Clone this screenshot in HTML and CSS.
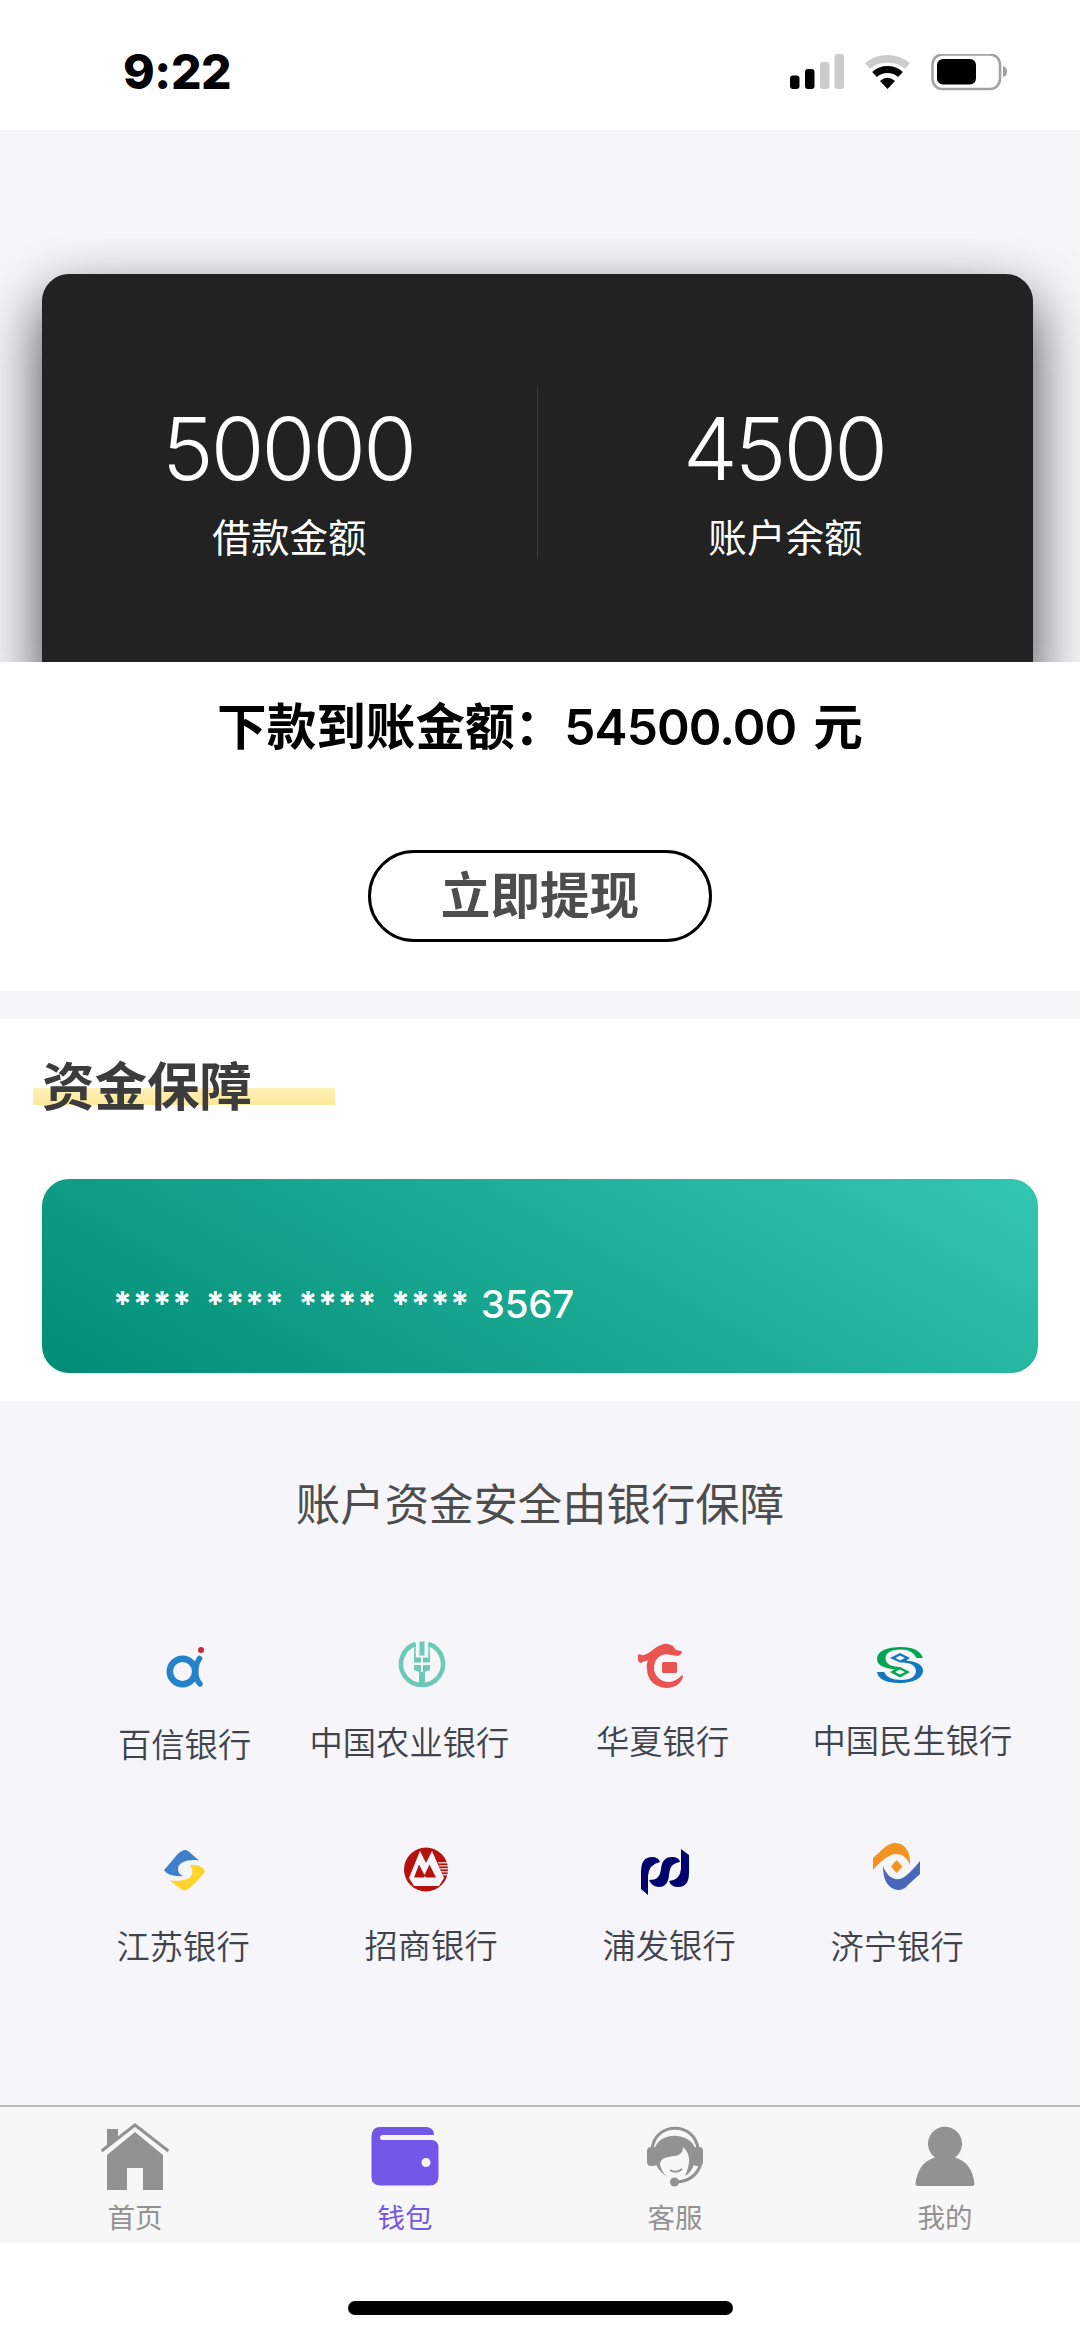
FILE: index.html
```html
<!DOCTYPE html>
<html lang="zh-CN">
<head>
<meta charset="utf-8">
<title>钱包</title>
<link rel="stylesheet" href="styles.css">
</head>
<body>
<div class="screen">
  <header class="status">
    <span class="clock">9:22</span>
    <svg class="status-icons" width="220" height="40" viewBox="0 0 220 40">
      <rect x="0" y="21.500" width="9.500" height="13.500" rx="3"/>
      <rect x="15" y="15" width="9.500" height="20" rx="3"/>
      <rect x="30" y="8" width="9.500" height="27" rx="3" fill="#ccc"/>
      <rect x="44.500" y="0" width="9.500" height="35" rx="3" fill="#ccc"/>
      <path d="M77.500 12A31 31 0 0 1 117.500 12" fill="none" stroke="#ccc" stroke-width="7.500"/>
      <path d="M84.500 20.500A19.500 19.500 0 0 1 110.500 20.500" fill="none" stroke="#000" stroke-width="7"/>
      <path d="M90 27Q97.500 20.500 105 27L97.500 35Z"/>
      <rect x="142.500" y="0.500" width="67.500" height="34.500" rx="10" fill="none" stroke="#a2a2a2" stroke-width="2.500"/>
      <rect x="147" y="5" width="39" height="25.500" rx="6"/>
      <path d="M213 12Q217 13 217 17.500T213 23Z" fill="#a2a2a2"/>
    </svg>
  </header>
  <section class="hero">
    <div class="balance">
      <div class="amount"><strong>50000</strong><span>借款金额</span></div>
      <div class="amount amount-right"><strong>4500</strong><span>账户余额</span></div>
    </div>
  </section>
  <section class="withdraw">
    <p class="total"><span>下款到账金额：</span><span class="total-num">54500.00</span><span>元</span></p>
    <button class="cash">立即提现</button>
  </section>
  <section class="guard">
    <h2 class="guard-title">资金保障</h2>
    <div class="bankcard"><span class="stars">****</span><span class="stars">****</span><span class="stars">****</span><span class="stars">****</span><span class="tail">3567</span></div>
  </section>
  <section class="banks">
    <h3 class="banks-title">账户资金安全由银行保障</h3>
    <div class="row">
      <div class="bank baixin">
        <svg width="48" height="48" viewBox="0 0 48 48"><circle cx="20.500" cy="30.500" r="12.700" fill="none" stroke="#2482c9" stroke-width="6.500"/><path d="M37.500 17.500C32.500 25 32 36 38 43" fill="none" stroke="#2482c9" stroke-width="5.500" stroke-linecap="round"/><circle cx="39" cy="9" r="3" fill="#c3283c"/></svg>
        <span>百信银行</span>
      </div>
      <div class="bank nongye">
        <svg width="48" height="48" viewBox="0 0 48 48"><path d="M17.500 3A21 21 0 1 0 30.500 3" fill="none" stroke="#6cc9b8" stroke-width="4.500"/><path fill="#6cc9b8" d="M21.500 0.500h5v14h-5zM16.500 2h1.200v14.500h5.300v5h-7v-6zM31.500 2h-1.200v14.500H25v5h7v-6zM16 24h7v7.500l-7-2.500zM32 24h-7v7.500l7-2.500zM21 31h6v15h-6z"/></svg>
        <span>中国农业银行</span>
      </div>
      <div class="bank huaxia">
        <svg width="48" height="48" viewBox="0 0 48 48"><path fill="#e95350" d="M1 15C3 13 4 16 7 15C14 13 18 6 27 4C31 3 33 5 36 6L39 10L44 11C46 12 44 15 41 16L34 15C25 12 17 18 17 28C17 36 24 42 32 42C39 42 43 36 46 35C46 42 39 48 29 48C17 47 10 39 10 29Q9 24 11 21Q8 20 4 23Q0 22 1 15Z"/><rect x="25" y="22" width="15" height="11" rx="1.500" fill="#e95350"/></svg>
        <span>华夏银行</span>
      </div>
      <div class="bank minsheng">
        <svg width="48" height="48" viewBox="0 0 48 48"><path fill="#00a651" d="M47 18H40.500Q37 9.500 25 9.500C15 9.500 9.500 13 9.500 18C9.500 24 14 26.500 24 27L34 32L24 37.500L14 32L18.500 29.500C7 28 1 25 1 19C1 11 11 7 25 7Q43 7 47 18Z"/><path fill="#1177c0" d="M1 32H8Q12 40 25 40C35 40 40 36 40 31C40 25 34 22.500 24 22.500L14 18L24 13L34 18L30 20.500C41 21.500 47 25 47 30.500C47 38 38 43 24 43Q3 43 1 32Z"/><path fill="#f5f5fa" d="M24 29.500L29 32L24 34.500L19 32ZM24 15.500L29 18L24 20.500L19.500 18Z"/></svg>
        <span>中国民生银行</span>
      </div>
    </div>
    <div class="row">
      <div class="bank jiangsu">
        <svg width="48" height="48" viewBox="0 0 48 48"><path fill="#4080cb" d="M3 27C10 20 16 10 21 8Q24 6 27 8Q32 12 38 17.500C28 16 17 19 17 26Q17 31 22 33Q7 34 3 27Z"/><path fill="#ffd52c" d="M29 22C37 21 42 24 44 28.500C38 36 32 43 27 46Q23 49 20 46Q14 42 9 37.500Q29 39 31 31Q32 26 29 22Z"/></svg>
        <span>江苏银行</span>
      </div>
      <div class="bank zhaoshang">
        <svg width="48" height="48" viewBox="0 0 48 48"><circle cx="24" cy="25.500" r="22" fill="#b5120e"/><path fill="#f5f5fa" d="M18 7L24 19L30 7L42 34L37 42H12L7 34Z"/><path fill="#b5120e" d="M17 20.500L12 33.500H22L23 32L24 33.500H34L27.500 20.500L22.500 31Z"/><path fill="#f5f5fa" opacity=".75" d="M36 18H46V19.500H36.500ZM37 21H47V22.500H37.500ZM38 24H47V25.500H38.500ZM39 27H47V28.500H39.500ZM40 30H46V31.500H40.500Z"/></svg>
        <span>招商银行</span>
      </div>
      <div class="bank pufa">
        <svg width="50" height="48" viewBox="0 0 50 48"><path fill="#00006e" d="M1 24Q1 9 12 9Q18 9 20 14Q9 16 8 28V47L1 41ZM9 32C17 32 20 29 21 21C22 12 26 9 32 9Q39 9 40 14C31 16 30 19 29 27Q28 39 19 39Q12 39 9 32ZM41 1L49 7V25Q49 39 38 39Q31 39 29 33Q40 32 41 21Z"/></svg>
        <span>浦发银行</span>
      </div>
      <div class="bank jining">
        <svg width="48" height="50" viewBox="0 0 48 50"><path fill="#f39320" d="M0 16L11 6Q17 1 22 1C32 1 38 10 37 23C34 15 29 12 22 12Q13 13 0 28Z"/><path fill="#4867b8" d="M10 24C14 34 19 38 27 37Q34 35 47 19V32L36 42Q31 48 25 48Q10 46 10 24Z"/><path fill="#f39320" d="M23.500 18L29.500 24.500L23.500 31L18 24.500Z"/></svg>
        <span>济宁银行</span>
      </div>
    </div>
  </section>
  <nav class="tabs">
    <a class="tab"><svg width="68" height="68" viewBox="0 0 68 68"><g fill="#929292"><path d="M6 6H17V15L6 24Z"/><path d="M0.500 28L34 2L67.500 28" fill="none" stroke="#929292" stroke-width="3"/><path d="M34 9L62 32V67H42V45H26V67H6V32Z"/></g></svg><span>首页</span></a>
    <a class="tab active"><svg width="68" height="68" viewBox="0 1 68 68"><path fill="#7357e8" fill-rule="evenodd" d="M9 5H56Q63 6 63 13H11Q9 13 9 15.500T11 18H60Q67.500 18 67.500 26V55Q67 63.500 59 63.500H9Q.500 63 .500 55V14Q1 5 9 5ZM55 36A4.500 4.500 0 1 0 55 45A4.500 4.500 0 1 0 55 36Z"/></svg><span>钱包</span></a>
    <a class="tab"><svg width="68" height="68" viewBox="0 0 68 68"><path d="M11 27C13 -2 55 -2 57 27M60 40Q55 58 35 59" fill="none" stroke="#929292" stroke-width="3"/><g fill="#929292"><rect x="6" y="24" width="10" height="19" rx="4"/><rect x="52" y="24" width="10" height="19" rx="4"/><path d="M13 27C18 8 49 8 55 27V36Q51 50 44 53Q53 33 42 24Q42 32 34 33Q19 34 19 41Q20 48 26 54Q15 46 13 36Z"/><circle cx="33.500" cy="59" r="4.500"/></g><path d="M29 47Q35 51 41 46" fill="none" stroke="#929292" stroke-width="2"/></svg><span>客服</span></a>
    <a class="tab"><svg width="68" height="68" viewBox="0 1.500 68 68"><path fill="#929292" d="M24 36A17 17 0 1 1 44 36Q61 41 63.500 62Q63.500 64.500 61 64.500H7Q4.500 64.500 4.500 62Q7 41 24 36Z"/></svg><span>我的</span></a>
  </nav>
  <footer class="home"><i></i></footer>
</div>
</body>
</html>
```
FILE: styles.css
```css
* { box-sizing: border-box; }
body { margin: 0; background: #fff; font-family: Inter, "Noto Sans CJK SC", sans-serif; }
.screen { width: 1080px; height: 2337px; display: flex; flex-direction: column; overflow: hidden; }
h2, h3, p { margin: 0; }
svg { display: block; flex: none; }

.status { height: 130px; padding: 54px 70px 0 123px; display: flex; justify-content: space-between; align-items: flex-start; }
.clock { font-size: 48px; line-height: 36px; font-weight: 760; letter-spacing: -.4px; }

.hero { height: 532px; padding: 144px 47px 0 42px; background: #f5f5fa; overflow: hidden; }
.balance { height: 420px; padding-top: 113px; border-radius: 27px; background: #222; color: #fff; display: flex; box-shadow: 0 25px 60px rgba(0, 0, 0, .72); }
.amount { width: 496px; height: 172px; padding-top: 22px; display: flex; flex-direction: column; align-items: center; border-right: 1px solid #3a3a3a; }
.amount-right { width: 495px; border-right: 0; }
.amount strong { margin-left: -3px; font-size: 87px; line-height: 80px; font-weight: 360; letter-spacing: -2.9px; }
.amount span { margin-top: 21px; font-size: 38.6px; line-height: 56px; }

.withdraw { height: 329px; padding-top: 30px; display: flex; flex-direction: column; align-items: center; }
.total { display: flex; font-size: 49.6px; line-height: 70px; font-weight: 700; }
.total-num { margin-right: 17px; font-weight: 560; letter-spacing: -.9px; }
.cash { width: 344px; height: 92px; margin-top: 88px; padding: 0; border: 3px solid #000; border-radius: 46px; background: #fff; color: #4d4d4d; font: 700 49.6px/86px Inter, "Noto Sans CJK SC", sans-serif; }

.guard { height: 410px; padding: 44px 42px 28px; border-top: 28px solid #f5f5fa; }
.guard-title { width: 302px; height: 80px; margin-left: -9px; padding-left: 9px; background: linear-gradient(#feefb8, #fde999) 0 25px / 302px 17px no-repeat; color: #3c3c3c; font-size: 52.5px; line-height: 48px; font-weight: 700; }
.bankcard { height: 194px; border-radius: 27px; margin-top: 36px; padding: 102px 0 0 71px; display: flex; background: linear-gradient(30deg, #018d75, #33c6b0); color: #fff; font-size: 38.5px; font-weight: 540; line-height: 46px; }
.stars { width: 92.7px; font-size: 34px; font-weight: 750; letter-spacing: .7px; }
.tail { margin-left: -3px; letter-spacing: -.2px; }

.banks { height: 704px; padding-top: 78px; background: #f5f5fa; color: #4d4d4d; }
.banks-title { margin-bottom: 1px; font-size: 44.4px; line-height: 52px; font-weight: 400; text-align: center; }
.row { display: flex; align-items: flex-start; height: 202px; padding-top: 108px; }
.bank { display: flex; flex-direction: column; width: 132px; color: #40434c; font-size: 33.3px; line-height: 40px; font-weight: 350; white-space: nowrap; }
.baixin { margin-left: 118px; padding-top: 1px; gap: 36px; }
.baixin svg { margin-left: 43.5px; }
.nongye { width: 198px; margin-left: 59.5px; padding-top: 1px; gap: 34px; }
.nongye svg { margin-left: 88px; }
.huaxia { margin-left: 88.5px; gap: 34px; }
.huaxia svg { margin-left: 40.5px; }
.minsheng { width: 198px; margin-left: 84.5px; gap: 33px; }
.minsheng svg { margin-left: 63.5px; }
.jiangsu { margin-left: 116.5px; padding-top: 1px; gap: 35.5px; }
.jiangsu svg { margin-left: 44px; }
.zhaoshang { margin-left: 116px; padding-top: 1.5px; gap: 34px; }
.zhaoshang svg { margin-left: 37px; }
.pufa { margin-left: 106px; padding-top: 5.5px; gap: 30px; }
.pufa svg { margin-left: 37px; }
.jining { margin-left: 96px; gap: 35px; }
.jining svg { margin-left: 42.5px; }

.tabs { height: 138px; padding-top: 16px; border-top: 2px solid #bcbcbc; background: #f7f7f7; display: flex; }
.tab { width: 270px; display: flex; flex-direction: column; align-items: center; color: #929292; font-size: 27.5px; line-height: 36px; }
.tab span { margin-top: 9px; }
.tab.active { color: #7357e8; }

.home { flex: 1; padding-top: 58px; display: flex; justify-content: center; }
.home i { width: 385px; height: 14px; border-radius: 7px; background: #000; }
```
